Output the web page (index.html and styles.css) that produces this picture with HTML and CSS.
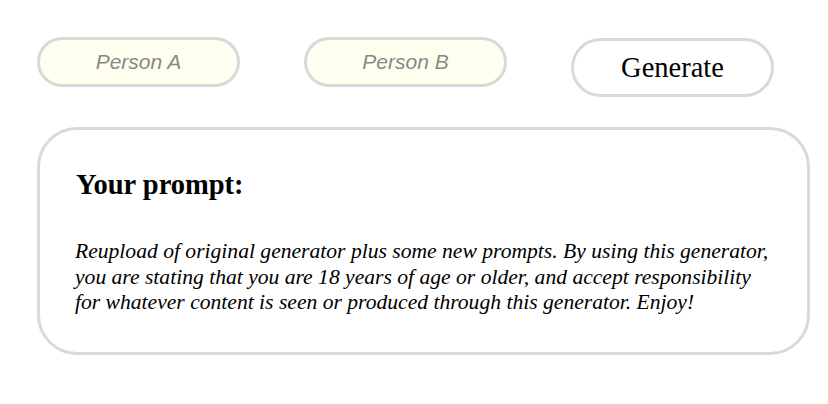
FILE: index.html
```html
<!DOCTYPE html>
<html>
<head>
<meta charset="utf-8">
<link rel="stylesheet" href="styles.css">
</head>
<body>
<div class="page">
  <div class="controls">
    <input class="field" type="text" placeholder="Person A">
    <input class="field" type="text" placeholder="Person B">
    <button class="generate">Generate</button>
  </div>
  <div class="card">
    <h2 class="title">Your prompt:</h2>
    <p class="prompt">Reupload of original generator plus some new prompts. By using this generator, you are stating that you are 18 years of age or older, and accept responsibility for whatever content is seen or produced through this generator. Enjoy!</p>
  </div>
</div>
</body>
</html>
```
FILE: styles.css
```css
html, body {
  margin: 0;
  padding: 0;
  background: #fff;
}
.page {
  padding: 37px 18px 0 37px;
  font-family: "Liberation Serif", serif;
}
.controls {
  display: flex;
  align-items: flex-start;
  gap: 64px;
}
.field {
  box-sizing: border-box;
  width: 203px;
  height: 50px;
  border: 3px solid #d9d9d9;
  border-radius: 25px;
  background: #fffff0;
  font-family: "Liberation Sans", sans-serif;
  font-size: 21px;
  font-style: italic;
  text-align: center;
  padding: 0 10px 1px;
  margin: 0;
  outline: none;
}
.field::placeholder {
  color: #888888;
}
.generate {
  box-sizing: border-box;
  width: 203px;
  height: 59px;
  margin-top: 1px;
  border: 3px solid #d9d9d9;
  border-radius: 30px;
  background: #fff;
  font-family: "Liberation Serif", serif;
  font-size: 28.5px;
  color: #000;
  padding: 0;
}
.card {
  box-sizing: border-box;
  width: 773px;
  height: 228px;
  margin-top: 30px;
  border: 3px solid #d9d9d9;
  border-radius: 40px;
  padding: 39px 32px 0 35px;
}
.title {
  margin: 0 0 0 1px;
  font-size: 28.5px;
  font-weight: bold;
  line-height: normal;
}
.prompt {
  margin: 38px 0 0;
  font-size: 21.6px;
  font-style: italic;
  line-height: 25.5px;
}
```
